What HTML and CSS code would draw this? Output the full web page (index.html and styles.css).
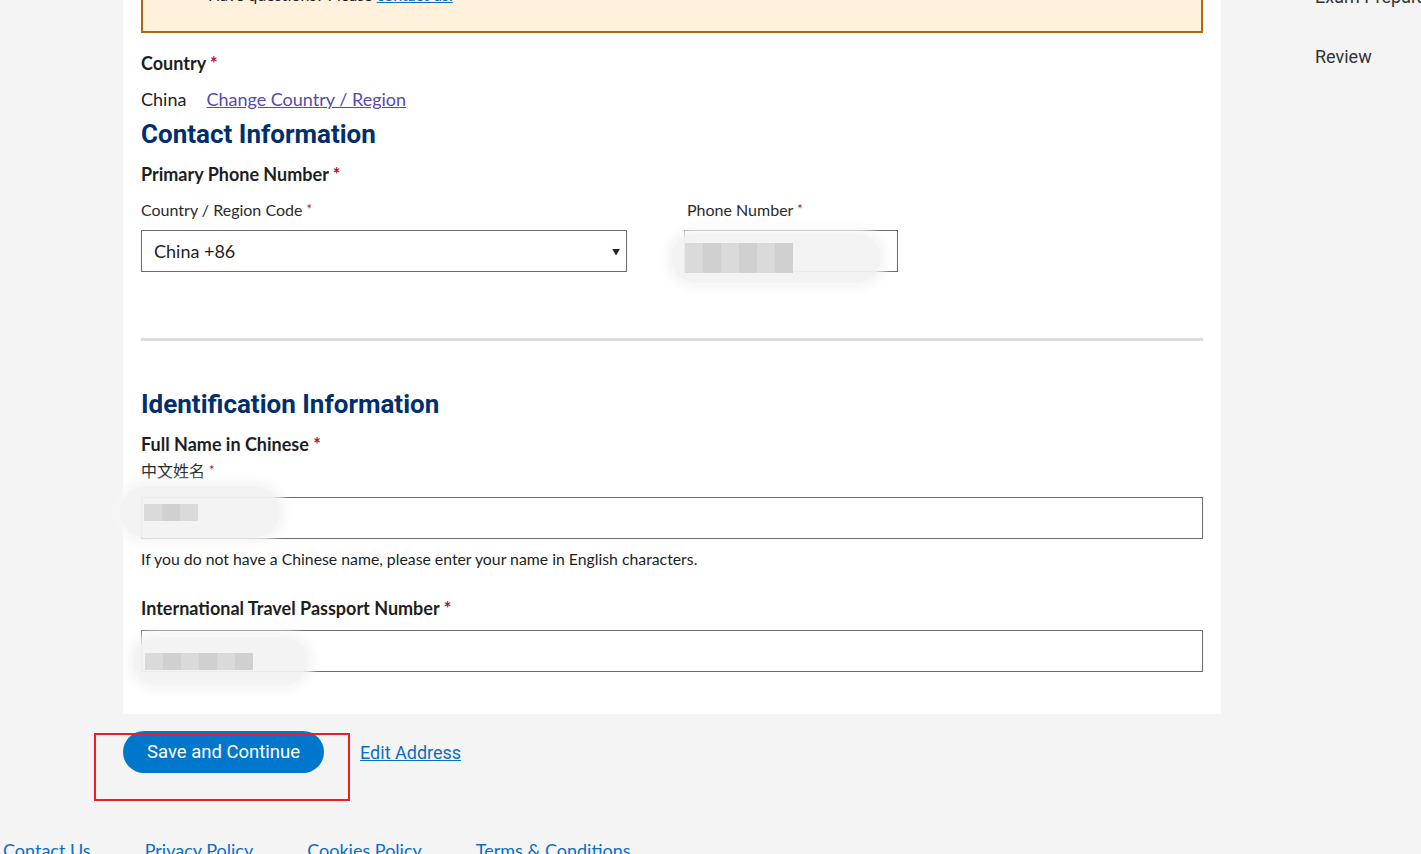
FILE: index.html
```html
<!DOCTYPE html>
<html lang="en">
<head>
  <meta charset="UTF-8" />
  <title>Contact and Identification</title>
  <link rel="stylesheet" href="styles.css">
</head>
<body>

  <div class="page">
    <main class="main">
      <section class="panel">

        <div class="notice">
          <p>Have questions? Please <a href="#">contact us.</a></p>
        </div>

        <div class="field country">
          <div class="label">Country <span class="req">*</span></div>
          <div class="country-line">
            <span>China</span>
            <a href="#" class="visited">Change Country / Region</a>
          </div>
        </div>

        <h2 class="section-title">Contact Information</h2>
        <div class="label">Primary Phone Number <span class="req">*</span></div>

        <div class="phone-row">
          <div class="phone-col code">
            <div class="sublabel">Country / Region Code <span class="req">*</span></div>
            <div class="select">
              <span>China +86</span>
              <span class="arrow">&#9660;</span>
            </div>
          </div>
          <div class="phone-col number">
            <div class="sublabel">Phone Number <span class="req">*</span></div>
            <div class="input small">
              <span class="blur blur-phone"><i></i><i></i><i></i><i></i><i></i><i></i></span>
            </div>
          </div>
        </div>

        <hr class="divider">

        <h2 class="section-title">Identification Information</h2>
        <div class="label">Full Name in Chinese <span class="req">*</span></div>
        <div class="sublabel cn">中文姓名 <span class="req">*</span></div>
        <div class="input wide">
          <span class="blur blur-name"><i></i><i></i><i></i></span>
        </div>
        <p class="help">If you do not have a Chinese name, please enter your name in English characters.</p>

        <div class="label passport">International Travel Passport Number <span class="req">*</span></div>
        <div class="input wide pass">
          <span class="blur blur-pass"><i></i><i></i><i></i><i></i><i></i><i></i></span>
        </div>

      </section>

      <div class="actions">
        <button class="btn-primary">Save and Continue</button>
        <a href="#" class="link">Edit Address</a>
        <span class="mark"></span>
      </div>
    </main>

    <aside class="steps">
      <div class="step">Exam Preparation</div>
      <div class="step">Review</div>
    </aside>
  </div>

  <footer class="footer">
    <a href="#">Contact Us</a>
    <a href="#">Privacy Policy</a>
    <a href="#">Cookies Policy</a>
    <a href="#">Terms &amp; Conditions</a>
  </footer>

</body>
</html>
```

FILE: styles.css
```css
body {
  margin: 0;
  background: #f4f4f4;
  font-family: Lato, "Noto Sans CJK SC", sans-serif;
  color: #1e1e1e;
}

.page {
  display: flex;
  align-items: flex-start;
  margin-top: -49px;
}

.main {
  margin-left: 123px;
  width: 1098px;
  flex-shrink: 0;
}

.panel {
  background: #fff;
  padding: 0 18px 42px;
}

/* Hinweis-Box oben */
.notice {
  background: #fff1dc;
  border: 2px solid #b4650f;
  border-top: none;
  padding: 34px 20px 26px 65px;
  font-size: 16px;
  line-height: 20px;
}

.notice p {
  margin: 0;
}

.notice a {
  color: #0a6fc2;
}

.label {
  font-size: 18px;
  font-weight: 700;
  line-height: 22px;
  color: #1e1e1e;
}

.req {
  color: #b3102c;
  font-weight: 700;
}

.sublabel .req {
  font-weight: 400;
  font-size: 13px;
  vertical-align: 2px;
}

.country {
  margin-top: 19px;
}

.country-line {
  margin-top: 14px;
  display: flex;
  gap: 20px;
  font-size: 18px;
  line-height: 22px;
}

.visited {
  color: #5949b0;
}

.section-title {
  margin: 8px 0 13px;
  font-family: Roboto, sans-serif;
  font-weight: 700;
  font-size: 26px;
  line-height: 32px;
  color: #002f6c;
}

.phone-row {
  display: flex;
  gap: 57px;
  margin-top: 14px;
}

.phone-col.code {
  width: 486px;
}

.phone-col.number .sublabel {
  padding-left: 3px;
}

.sublabel {
  font-size: 16px;
  line-height: 20px;
  color: #2a2a2a;
  margin-bottom: 10px;
}

.select {
  height: 42px;
  box-sizing: border-box;
  border: 1px solid #6b6b6b;
  display: flex;
  align-items: center;
  justify-content: space-between;
  padding: 0 6px 0 12px;
  font-size: 18px;
}

.arrow {
  font-size: 8px;
  color: #222;
}

.input {
  position: relative;
  height: 42px;
  box-sizing: border-box;
  border: 1px solid #6b6b6b;
  background: #fff;
}

.input.small {
  width: 214px;
}

.divider {
  border: none;
  border-top: 3px solid #dcdcdc;
  margin: 66px 0 47px;
}

.sublabel.cn {
  margin-top: 5px;
  margin-bottom: 16px;
}

.help {
  margin: 10px 0 0;
  font-size: 15.8px;
  line-height: 20px;
}

.passport {
  margin-top: 28px;
  margin-bottom: 11px;
}

/* Unkenntlich gemachte Eingaben */
.blur {
  position: absolute;
  display: flex;
  align-items: center;
  background: rgba(242, 242, 242, 0.95);
  border-radius: 30px;
  box-shadow: 0 0 8px 6px rgba(245, 245, 245, 0.9);
}

.blur i {
  display: block;
  width: 18px;
  height: 17px;
  background: #dadada;
}

.blur i:nth-child(2n) {
  background: #d0d0d0;
}

.blur-phone {
  left: -14px;
  top: 2px;
  width: 210px;
  height: 50px;
  padding-left: 14px;
  box-sizing: border-box;
}

.blur-phone i {
  height: 30px;
}

.blur-name {
  left: -22px;
  top: -12px;
  width: 160px;
  height: 52px;
  padding-left: 24px;
  box-sizing: border-box;
}

.blur-pass {
  left: -9px;
  top: 6px;
  width: 175px;
  height: 48px;
  padding-left: 12px;
  box-sizing: border-box;
}

.actions {
  position: relative;
  display: flex;
  align-items: center;
  gap: 36px;
  margin-top: 17px;
}

.btn-primary {
  background: #0077cc;
  color: #fff;
  border: none;
  border-radius: 21px;
  height: 42px;
  padding: 0 24px;
  font-family: Roboto, sans-serif;
  font-size: 18.5px;
  cursor: pointer;
}

.link {
  font-family: Roboto, sans-serif;
  font-size: 18px;
  color: #0a6fc2;
}

/* rote Markierung */
.mark {
  position: absolute;
  left: -29px;
  top: 2px;
  width: 256px;
  height: 68px;
  box-sizing: border-box;
  border: 2px solid #ee1c24;
}

.steps {
  margin-left: 94px;
  font-family: Roboto, sans-serif;
  font-size: 18px;
  color: #333;
  white-space: nowrap;
  padding-top: 35px;
}

.step {
  line-height: 22px;
  margin-bottom: 38px;
}

.footer {
  display: flex;
  gap: 54px;
  padding: 66px 0 0 3px;
  font-size: 18px;
}

.footer a {
  color: #0a6fc2;
}
```
